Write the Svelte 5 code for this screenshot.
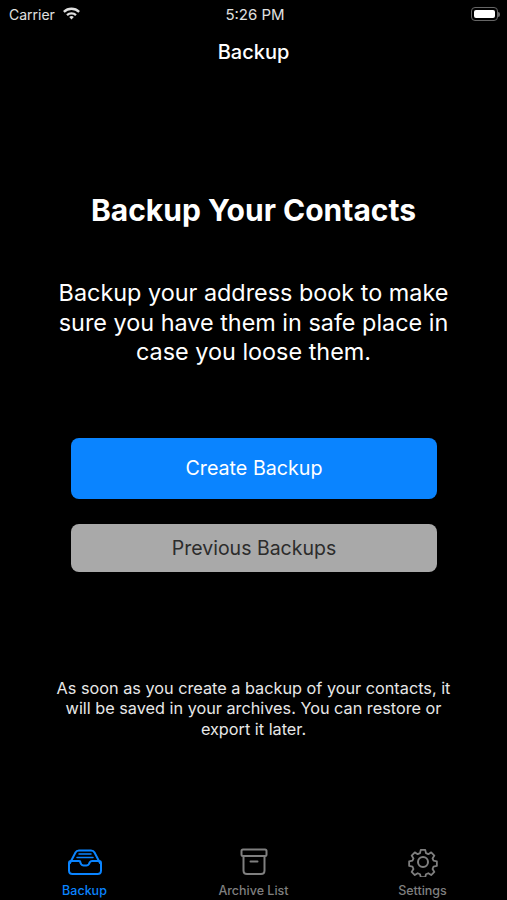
<script>
  let tabs = [
    { label: "Backup", icon: "inbox", active: true },
    { label: "Archive List", icon: "archive", active: false },
    { label: "Settings", icon: "gear", active: false }
  ];
</script>

<div class="screen">
  <div class="status">
    <div class="carrier">
      <span>Carrier</span>
      <svg class="wifi" width="19" height="14" viewBox="0 0 18 13">
        <path d="M1 4.6a11.6 11.6 0 0 1 16 0l-1.5 1.6a9.4 9.4 0 0 0-13 0z" fill="currentColor"/>
        <path d="M4 7.7a7.3 7.3 0 0 1 10 0l-1.500 1.600a5.100 5.100 0 0 0-7 0z" fill="currentColor"/>
        <path d="M6.800 10.400a3.200 3.200 0 0 1 4.400 0L9 12.700z" fill="currentColor"/>
      </svg>
    </div>
    <div class="time">5:26 PM</div>
    <div class="battery">
      <div class="battery-body"><div class="battery-fill"></div></div>
      <div class="battery-tip"></div>
    </div>
  </div>

  <div class="nav">Backup</div>

  <main>
    <h1>Backup Your Contacts</h1>
    <p class="lead">Backup your address book to make sure you have them in safe place in case you loose them.</p>
    <button class="btn primary">Create Backup</button>
    <button class="btn secondary">Previous Backups</button>
    <p class="note">As soon as you create a backup of your contacts, it will be saved in your archives. You can restore or export it later.</p>
  </main>

  <div class="tabbar">
    {#each tabs as t}
      <div class="tab" class:active={t.active}>
        <svg width="36" height="30" viewBox="0 0 36 30" fill="none" stroke="currentColor" stroke-width="2" stroke-linecap="round" stroke-linejoin="round">
          {#if t.icon === "inbox"}
            <path d="M3 16 8.500 5.500Q9.500 3.500 12 3.500h12Q26.500 3.500 27.500 5.500L33 16"/>
            <path d="M2 16v7.500q0 3.500 3.500 3.500h25q3.500 0 3.500-3.500V16q0-2-2-2h-7q-1.500 0-2.200 1.200l-1 2q-.8 1.300-2.300 1.300h-3q-1.500 0-2.300-1.300l-1-2Q13.500 14 12 14H4q-2 0-2 2z"/>
            <path d="M12 7h12M10 10.500h16" stroke-width="1.500"/>
          {:else if t.icon === "archive"}
            <rect x="5.500" y="2.500" width="25" height="6.500" rx="1.500"/>
            <path d="M7.500 9v14.500q0 3.500 3.500 3.500h14q3.500 0 3.500-3.500V9"/>
            <path d="M14.500 14.500h7"/>
          {:else}
            <circle cx="18" cy="15" r="5"/>
            <path d="M15.500 1.500h5l.8 3.700 2.600 1.100 3.200-2 3.500 3.500-2 3.200 1.100 2.600 3.700.8v5l-3.700.8-1.100 2.600 2 3.200-3.500 3.500-3.200-2-2.600 1.100-.8 3.200h-5l-.8-3.200-2.600-1.100-3.200 2-3.500-3.500 2-3.200-1.100-2.600-3.700-.8v-5l3.700-.8 1.100-2.600-2-3.200 3.500-3.500 3.200 2 2.600-1.100z" transform="translate(1.800 1.500) scale(.9)"/>
          {/if}
        </svg>
        <span>{t.label}</span>
      </div>
    {/each}
  </div>
</div>

<style>
  :global(body) {
    margin: 0;
    background: #000;
  }
  .screen {
    width: 507px;
    height: 900px;
    background: #000;
    color: #fff;
    font-family: Inter, "Liberation Sans", sans-serif;
    display: flex;
    flex-direction: column;
    overflow: hidden;
  }
  .status {
    height: 28px;
    display: grid;
    grid-template-columns: 1fr auto 1fr;
    align-items: center;
    padding: 0 7px 0 9px;
    font-size: 14px;
    color: #e0e0e0;
  }
  .time {
    font-size: 15px;
    margin-right: -1px;
  }
  .carrier {
    display: flex;
    align-items: center;
    gap: 7px;
  }
  .wifi {
    margin-top: -3px;
  }
  .battery {
    display: flex;
    align-items: center;
    justify-content: flex-end;
  }
  .battery-body {
    width: 27px;
    height: 14px;
    box-sizing: border-box;
    border: 1px solid #666;
    border-radius: 4px;
    padding: 2px;
  }
  .battery-fill {
    height: 100%;
    background: #fff;
    border-radius: 2px;
  }
  .battery-tip {
    width: 2px;
    height: 5px;
    background: #666;
    border-radius: 0 2px 2px 0;
  }
  .nav {
    height: 48px;
    line-height: 48px;
    text-align: center;
    font-size: 20px;
    font-weight: 500;
  }
  main {
    flex: 1;
    display: flex;
    flex-direction: column;
    align-items: center;
  }
  h1 {
    margin: 114px 0 0;
    font-size: 30px;
    line-height: 40px;
    font-weight: 700;
  }
  .lead {
    margin: 48px 0 0;
    width: 410px;
    text-align: center;
    font-size: 23.400px;
    line-height: 29.500px;
  }
  .btn {
    width: 366px;
    margin-left: 1px;
    border: 0;
    border-radius: 8px;
    font: inherit;
    padding: 0;
  }
  .primary {
    margin-top: 71px;
    height: 61px;
    background: #0a84ff;
    color: #fff;
    font-size: 19.700px;
  }
  .secondary {
    margin-top: 25px;
    height: 48px;
    background: #a9a9a9;
    color: #2c2c2c;
    font-size: 19.500px;
  }
  .note {
    margin: 106px 0 0;
    width: 410px;
    text-align: center;
    font-size: 16.250px;
    line-height: 20.500px;
    color: #e8e8e8;
  }
  .tabbar {
    height: 54px;
    display: grid;
    grid-template-columns: repeat(3, 1fr);
  }
  .tab {
    display: flex;
    flex-direction: column;
    align-items: center;
    padding-top: 1px;
    color: #7f7f7f;
    font-size: 12.500px;
    font-weight: 500;
  }
  .tab span {
    margin-top: 6px;
  }
  .tab.active {
    color: #0a84ff;
  }
</style>
